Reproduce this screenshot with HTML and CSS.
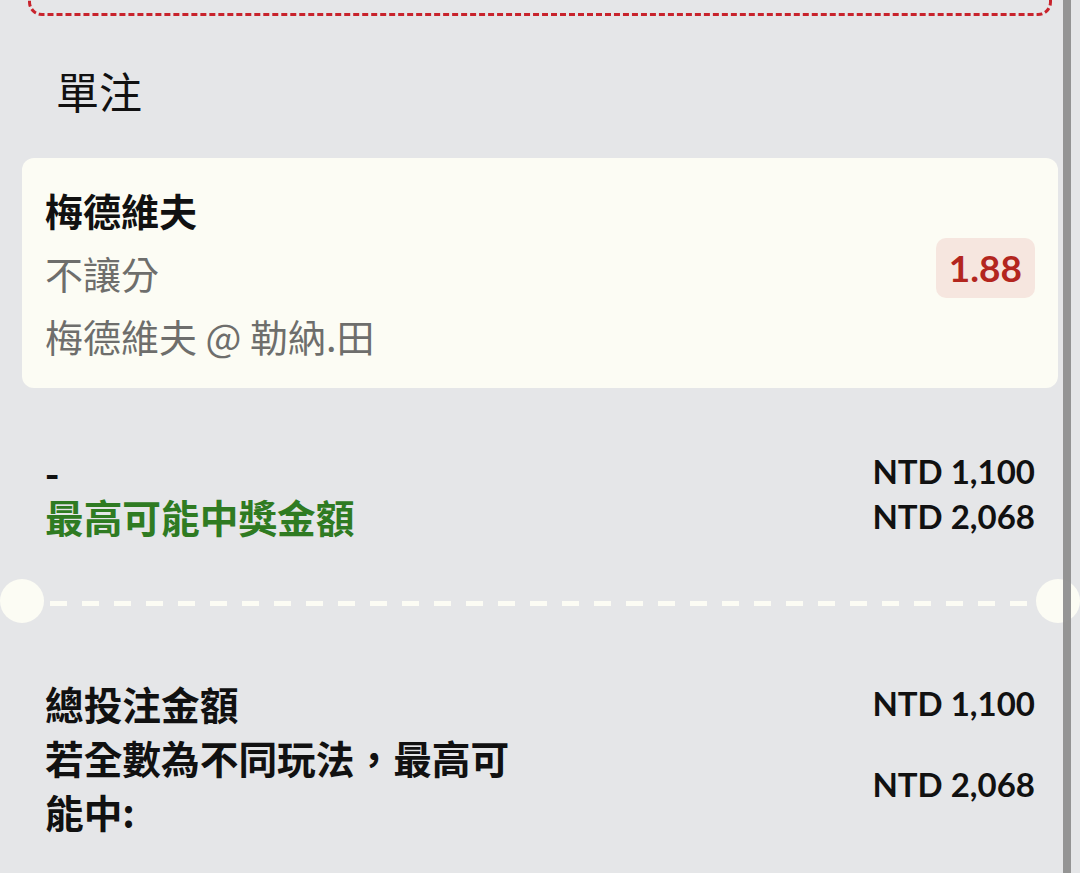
FILE: index.html
```html
<!DOCTYPE html>
<html lang="zh-Hant">
<head>
<meta charset="utf-8">
<title>單注</title>
<link rel="stylesheet" href="styles.css">
</head>
<body>
<div class="page">
  <div class="promo"></div>
  <h2 class="section-title">單注</h2>
  <div class="card">
    <div class="card-info">
      <div class="pick">梅德維夫</div>
      <div class="muted">不讓分</div>
      <div class="muted">梅德維夫 @ 勒納.田</div>
    </div>
    <div class="odds">1.88</div>
  </div>
  <div class="rows rows-mid">
    <div class="label">-</div>
    <div class="amount">NTD 1,100</div>
    <div class="label green">最高可能中獎金額</div>
    <div class="amount">NTD 2,068</div>
  </div>
  <div class="separator">
    <span class="notch"></span>
    <span class="dashes"></span>
    <span class="notch"></span>
  </div>
  <div class="rows rows-total">
    <div class="label">總投注金額</div>
    <div class="amount">NTD 1,100</div>
    <div class="label narrow">若全數為不同玩法，最高可能中:</div>
    <div class="amount">NTD 2,068</div>
  </div>
</div>
<div class="scrollbar"></div>
</body>
</html>
```

FILE: styles.css
```css
html, body {
  margin: 0;
  padding: 0;
}
body {
  background: #e5e6e8;
  font-family: "Noto Sans CJK TC", "Noto Sans", sans-serif;
  color: #111;
  overflow: hidden;
  height: 873px;
}
.page {
  padding: 0 22px;
}
.promo {
  height: 60px;
  margin: -50px 6px 0;
  border: 3px dashed #c8232c;
  border-radius: 14px;
}
.section-title {
  margin: 44px 0 38px;
  padding-left: 34px;
  font-size: 43px;
  font-weight: 400;
  line-height: 60px;
}
.card {
  background: #fcfcf4;
  border-radius: 12px;
  padding: 20px 23px 21px 23px;
  display: flex;
  align-items: center;
  justify-content: space-between;
}
.card-info {
  font-size: 38px;
  line-height: 63px;
}
.pick {
  font-weight: 700;
  color: #111;
}
.muted {
  color: #6e6e6c;
}
.odds {
  font-family: "Lato", "Liberation Sans", sans-serif;
  font-weight: 700;
  font-size: 37px;
  color: #b3261e;
  background: #f6e6df;
  border-radius: 10px;
  height: 60px;
  line-height: 60px;
  padding: 0 13px;
  margin-bottom: 10px;
}
.rows {
  display: grid;
  grid-template-columns: 1fr auto;
  align-items: center;
  padding: 0 23px;
}
.rows-mid {
  margin-top: 61px;
  line-height: 45px;
}
.rows-total {
  margin-top: 53px;
  line-height: 54px;
}
.label {
  font-size: 38.7px;
  font-weight: 700;
}
.green {
  color: #2f7b22;
}
.narrow {
  max-width: 490px;
}
.amount {
  font-family: "Lato", "Liberation Sans", sans-serif;
  font-weight: 700;
  font-size: 33px;
  text-align: right;
}
.separator {
  margin: 40px -22px 0;
  height: 44px;
  display: flex;
  align-items: center;
}
.notch {
  width: 44px;
  height: 44px;
  border-radius: 50%;
  background: #fcfcf4;
  flex: none;
}
.dashes {
  flex: 1;
  height: 5px;
  margin: 4px 6px 0;
  background: repeating-linear-gradient(to right, #fcfcf4 0 17px, transparent 17px 32px);
}
.scrollbar {
  position: fixed;
  top: 0;
  bottom: 0;
  left: 1063px;
  width: 8px;
  background: #8f8f8f;
  opacity: 0.95;
}
```
